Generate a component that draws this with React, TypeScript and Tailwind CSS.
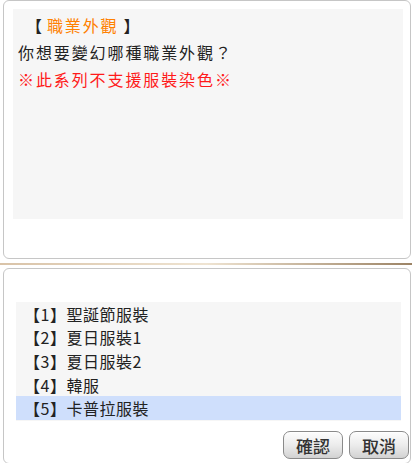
import React from "react";

const font = { fontFamily: '"Noto Sans CJK TC", "Noto Sans CJK SC", "Liberation Sans", sans-serif' };

const options = ["聖誕節服裝", "夏日服裝1", "夏日服裝2", "韓服", "卡普拉服裝"];

function Btn({ label }: { label: string }) {
  return (
    <button
      className="h-[28px] w-[60px] rounded-[7px] border border-[#8a8a8a] bg-gradient-to-b from-[#fdfdfd] via-[#ececec] to-[#d2d2d2] text-[17px] font-medium leading-none text-[#333] shadow-[inset_0_1px_0_#fff]"
      style={font}
    >
      {label}
    </button>
  );
}

export default function App() {
  return (
    <div className="relative h-[463px] w-[412px] overflow-hidden bg-white text-[#222]" style={font}>
      {/* message window */}
      <div className="ml-[3px] h-[259px] w-[408px] rounded-[6px] border border-[#c6c6c6] bg-white pt-[8px]">
        <div className="ml-[9px] h-[210px] w-[390px] bg-[#f6f6f6] px-[5px] pt-[3px] text-[16px] leading-[27px] tracking-[1.9px]">
          <div className="flex items-center">
            <span className="ml-[8px] font-medium">【</span>
            <span className="ml-[3px] text-[#ff8000]">職業外觀</span>
            <span className="ml-[5px] font-medium">】</span>
          </div>
          <div>你想要變幻哪種職業外觀？</div>
          <div className="text-[#ff1a1a]">※此系列不支援服裝染色※</div>
        </div>
      </div>

      {/* divider */}
      <div className="mt-[4px] h-[2px] w-full bg-gradient-to-r from-[#d9c3a8] via-[#efe4d2] to-[#9c8466]" />

      {/* menu window */}
      <div className="ml-[3px] mt-[3px] h-[196px] w-[408px] rounded-[6px] border border-[#c6c6c6] bg-white pt-[33px]">
        <div className="ml-[12px] h-[119px] w-[385px] bg-[#f6f6f6] text-[16px] tracking-[0.5px]">
          {options.map((o, i) => (
            <div
              key={o}
              className={`flex h-[23.6px] items-center pl-[8px] ${i === options.length - 1 ? "bg-[#cfdffc]" : ""}`}
            >
              <span>【{i + 1}】</span>
              <span>{o}</span>
            </div>
          ))}
        </div>
        <div className="mt-[10px] flex justify-end gap-[6px] pr-[1px]">
          <Btn label="確認" />
          <Btn label="取消" />
        </div>
      </div>
    </div>
  );
}
